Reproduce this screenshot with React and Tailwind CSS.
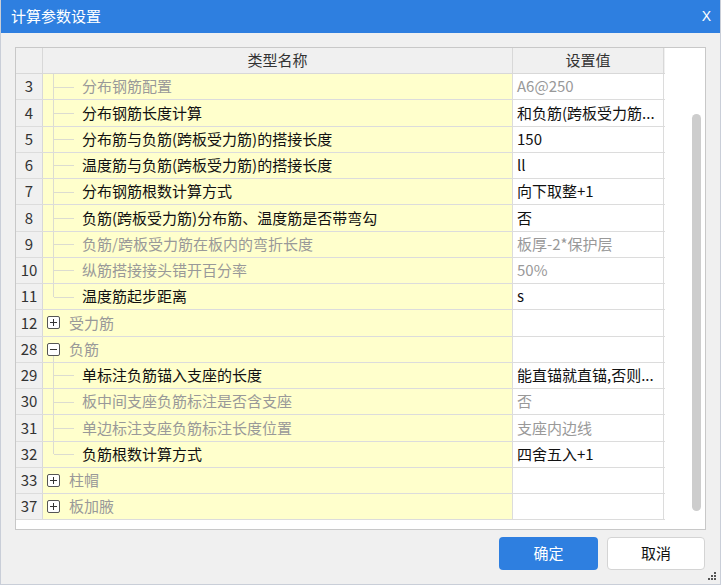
import React from 'react';

const rows = [
  { n: 3, name: '分布钢筋配置', val: 'A6@250', dim: true, kind: 'child' },
  { n: 4, name: '分布钢筋长度计算', val: '和负筋(跨板受力筋...', kind: 'child' },
  { n: 5, name: '分布筋与负筋(跨板受力筋)的搭接长度', val: '150', kind: 'child' },
  { n: 6, name: '温度筋与负筋(跨板受力筋)的搭接长度', val: 'll', kind: 'child' },
  { n: 7, name: '分布钢筋根数计算方式', val: '向下取整+1', kind: 'child' },
  { n: 8, name: '负筋(跨板受力筋)分布筋、温度筋是否带弯勾', val: '否', kind: 'child' },
  { n: 9, name: '负筋/跨板受力筋在板内的弯折长度', val: '板厚-2*保护层', dim: true, kind: 'child' },
  { n: 10, name: '纵筋搭接接头错开百分率', val: '50%', dim: true, kind: 'child' },
  { n: 11, name: '温度筋起步距离', val: 's', kind: 'child', last: true },
  { n: 12, name: '受力筋', val: '', kind: 'group' },
  { n: 28, name: '负筋', val: '', kind: 'open' },
  { n: 29, name: '单标注负筋锚入支座的长度', val: '能直锚就直锚,否则...', kind: 'child' },
  { n: 30, name: '板中间支座负筋标注是否含支座', val: '否', dim: true, kind: 'child' },
  { n: 31, name: '单边标注支座负筋标注长度位置', val: '支座内边线', dim: true, kind: 'child' },
  { n: 32, name: '负筋根数计算方式', val: '四舍五入+1', kind: 'child', last: true },
  { n: 33, name: '柱帽', val: '', kind: 'group' },
  { n: 37, name: '板加腋', val: '', kind: 'group' },
];

const font = { fontFamily: '"Microsoft YaHei", "Noto Sans CJK SC", "Noto Sans", sans-serif' };

const ExpandBox = ({ open }) => (
  <span className="relative flex h-[13px] w-[13px] items-center justify-center rounded-[2px] border border-[#555] bg-white">
    <span className="absolute h-[1px] w-[7px] bg-[#333]" />
    {!open && <span className="absolute h-[7px] w-[1px] bg-[#333]" />}
  </span>
);

const NameCell = ({ row }) => {
  if (row.kind === 'child') {
    return (
      <div className="relative flex h-full items-center pl-[39px]">
        <span
          className={`absolute left-[10px] top-0 w-[1px] bg-[#dcdcd0] ${row.last ? 'h-1/2' : 'h-full'}`}
        />
        <span className="absolute left-[11px] top-1/2 h-[1px] w-[20px] bg-[#dcdcd0]" />
        <span className={row.dim ? 'text-[#999]' : 'text-[#111]'}>{row.name}</span>
      </div>
    );
  }
  return (
    <div className="relative flex h-full items-center gap-[9px] pl-[4px]">
      <ExpandBox open={row.kind === 'open'} />
      {row.kind === 'open' && (
        <span className="absolute bottom-0 left-[10px] h-[6px] w-[1px] bg-[#dcdcd0]" />
      )}
      <span className="text-[#999]">{row.name}</span>
    </div>
  );
};

export default function App() {
  return (
    <div
      className="relative flex h-[585px] w-[721px] flex-col border-x border-b border-[#c9ced8] bg-[#f0f0f0] text-[15px]"
      style={font}
    >
      {/* Title bar */}
      <div className="flex h-[33px] shrink-0 items-center justify-between bg-[#2e7fe0] pl-[10px] pr-[9px] text-white">
        <span className="text-[15px]">计算参数设置</span>
        <span className="text-[14px]" style={{ fontFamily: '"Liberation Sans", sans-serif' }}>X</span>
      </div>

      {/* Table frame */}
      <div className="ml-[14px] mt-[14px] flex h-[483px] w-[691px] border border-[#c8c8c8] bg-white">
        <div className="flex w-[649px] flex-col">
          <div className="flex h-[26px] shrink-0 border-b border-[#d8d8d8] bg-[#f0f0f0] text-[#333]">
            <div className="w-[27px] border-r border-[#d8d8d8]" />
            <div className="flex w-[470px] items-center justify-center border-r border-[#d8d8d8]">类型名称</div>
            <div className="flex w-[151px] items-center justify-center border-r border-[#d8d8d8]">设置值</div>
          </div>
          {rows.map((row) => (
            <div key={row.n} className="flex h-[26.25px] shrink-0 border-b border-[#dcdcdc]">
              <div className="flex w-[27px] items-center justify-center border-r border-[#d8d8d8] bg-[#f0f0f0] text-[#333]">
                {row.n}
              </div>
              <div className="w-[470px] border-r border-[#dcdcdc] bg-[#ffffcc]">
                <NameCell row={row} />
              </div>
              <div
                className={`flex w-[151px] items-center overflow-hidden whitespace-nowrap border-r border-[#dcdcdc] pl-[4px] ${
                  row.dim ? 'text-[#999]' : 'text-[#111]'
                }`}
              >
                {row.val}
              </div>
            </div>
          ))}
        </div>
        {/* scroll zone */}
        <div className="flex-1 pl-[27px] pt-[66px]">
          <div className="h-[397px] w-[9px] rounded-full bg-[#cdcdcd]" />
        </div>
      </div>

      {/* Buttons */}
      <div className="mt-[7px] flex justify-end gap-[9px] pr-[15px]">
        <button className="flex h-[33px] w-[99px] items-center justify-center rounded-[4px] bg-[#2e7fe0] text-white">
          确定
        </button>
        <button className="flex h-[33px] w-[98px] items-center justify-center rounded-[4px] border border-[#d4d4d4] bg-white text-[#111]">
          取消
        </button>
      </div>

      {/* resize grip */}
      <div className="absolute bottom-[4px] right-[4px] grid grid-cols-3 gap-[1px]">
        <span className="h-[2px] w-[2px]" />
        <span className="h-[2px] w-[2px]" />
        <span className="h-[2px] w-[2px] bg-[#555]" />
        <span className="h-[2px] w-[2px]" />
        <span className="h-[2px] w-[2px] bg-[#555]" />
        <span className="h-[2px] w-[2px] bg-[#555]" />
        <span className="h-[2px] w-[2px] bg-[#555]" />
        <span className="h-[2px] w-[2px] bg-[#555]" />
        <span className="h-[2px] w-[2px] bg-[#555]" />
      </div>
    </div>
  );
}
